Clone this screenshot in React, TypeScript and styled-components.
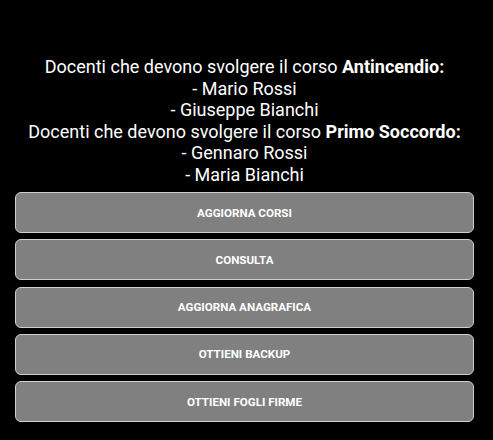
import React from "react";
import styled, { createGlobalStyle } from "styled-components";

const Global = createGlobalStyle`
  html, body { margin: 0; padding: 0; background: #000; }
  body { font-family: Roboto, "Liberation Sans", sans-serif; }
`;

const Page = styled.div`
  width: 459px;
  margin-left: 15px;
  padding-top: 56px;
  display: flex;
  flex-direction: column;
`;

const Info = styled.div`
  color: #fff;
  font-size: 18px;
  line-height: 21.5px;
  text-align: center;
  margin-bottom: 7px;
`;

const Line = styled.div``;

const ButtonList = styled.div`
  display: flex;
  flex-direction: column;
  gap: 6.3px;
`;

const Button = styled.button`
  height: 41px;
  width: 100%;
  box-sizing: border-box;
  background: #808080;
  border: 1px solid #d0d0d0;
  border-radius: 6px;
  color: #fff;
  font-family: Roboto, "Liberation Sans", sans-serif;
  font-weight: 700;
  font-size: 11.6px;
  text-transform: uppercase;
  cursor: pointer;
`;

const courses = [
  { name: "Antincendio", people: ["Mario Rossi", "Giuseppe Bianchi"] },
  { name: "Primo Soccordo", people: ["Gennaro Rossi", "Maria Bianchi"] },
];

const actions = [
  "Aggiorna corsi",
  "Consulta",
  "Aggiorna anagrafica",
  "Ottieni backup",
  "Ottieni fogli firme",
];

export default function App() {
  return (
    <>
      <Global />
      <Page>
        <Info>
          {courses.map((c) => (
            <React.Fragment key={c.name}>
              <Line>
                Docenti che devono svolgere il corso <b>{c.name}:</b>
              </Line>
              {c.people.map((p) => (
                <Line key={p}>- {p}</Line>
              ))}
            </React.Fragment>
          ))}
        </Info>
        <ButtonList>
          {actions.map((a) => (
            <Button key={a}>{a}</Button>
          ))}
        </ButtonList>
      </Page>
    </>
  );
}
